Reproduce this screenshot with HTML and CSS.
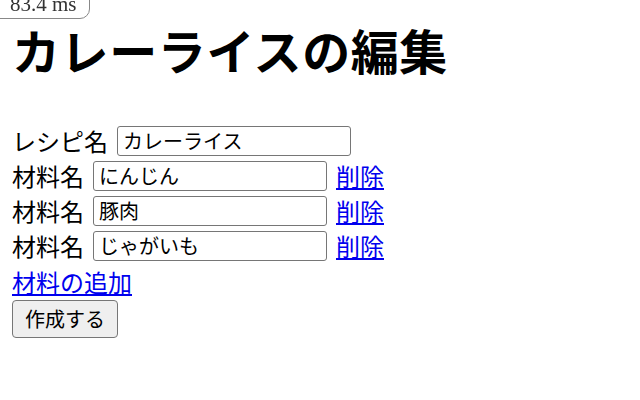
FILE: index.html
```html
<!DOCTYPE html>
<html lang="ja">
<head>
  <meta charset="utf-8">
  <meta name="viewport" content="width=device-width, initial-scale=1">
  <title>カレーライスの編集</title>
  <link rel="stylesheet" href="styles.css">
</head>
<body>
  <div class="timer">83.4 ms</div>

  <h1 class="title">カレーライスの編集</h1>

  <form class="recipe-form">
    <div class="row">
      <label>レシピ名<input type="text" value="カレーライス"></label>
    </div>
    <div class="row">
      <label>材料名<input type="text" value="にんじん"></label>
      <a href="#">削除</a>
    </div>
    <div class="row">
      <label>材料名<input type="text" value="豚肉"></label>
      <a href="#">削除</a>
    </div>
    <div class="row">
      <label>材料名<input type="text" value="じゃがいも"></label>
      <a href="#">削除</a>
    </div>
    <div class="row add-row">
      <a href="#">材料の追加</a>
    </div>
    <button type="submit" class="submit">作成する</button>
  </form>
</body>
</html>
```

FILE: styles.css
```css
body {
  margin: 12px;
  font-family: "Noto Sans CJK JP", sans-serif;
  font-size: 24px;
  color: #000;
  background: #fff;
}

/* 左上の計測表示 (画面外に少しはみ出す) */
.timer {
  position: fixed;
  top: -11px;
  left: -1px;
  padding: 0 12px 0 10px;
  font-family: "Liberation Serif", serif;
  font-size: 21px;
  line-height: 28px;
  color: #333;
  background: #fff;
  border: 1px solid #888;
  border-radius: 0 0 10px 0;
}

.title {
  margin: 2px 0 39px;
  font-size: 48px;
  font-weight: bold;
  letter-spacing: 0.6px;
}

.row {
  display: flex;
  align-items: center;
  gap: 9px;
  height: 35px;
}

.row label {
  display: flex;
  align-items: center;
  gap: 9px;
}

.row input {
  box-sizing: border-box;
  width: 234px;
  height: 30px;
  padding: 0 5px;
  font-family: "Noto Sans CJK JP", sans-serif;
  font-size: 20px;
  color: #000;
  border: 1.5px solid #767676;
  border-radius: 3px;
}

.row a {
  color: #0000ee;
}

.add-row {
  height: 36px;
}

.submit {
  box-sizing: border-box;
  height: 38px;
  padding: 0 12px;
  font-family: "Noto Sans CJK JP", sans-serif;
  font-size: 20px;
  color: #000;
  background: #efefef;
  border: 1.5px solid #767676;
  border-radius: 4px;
}
```
